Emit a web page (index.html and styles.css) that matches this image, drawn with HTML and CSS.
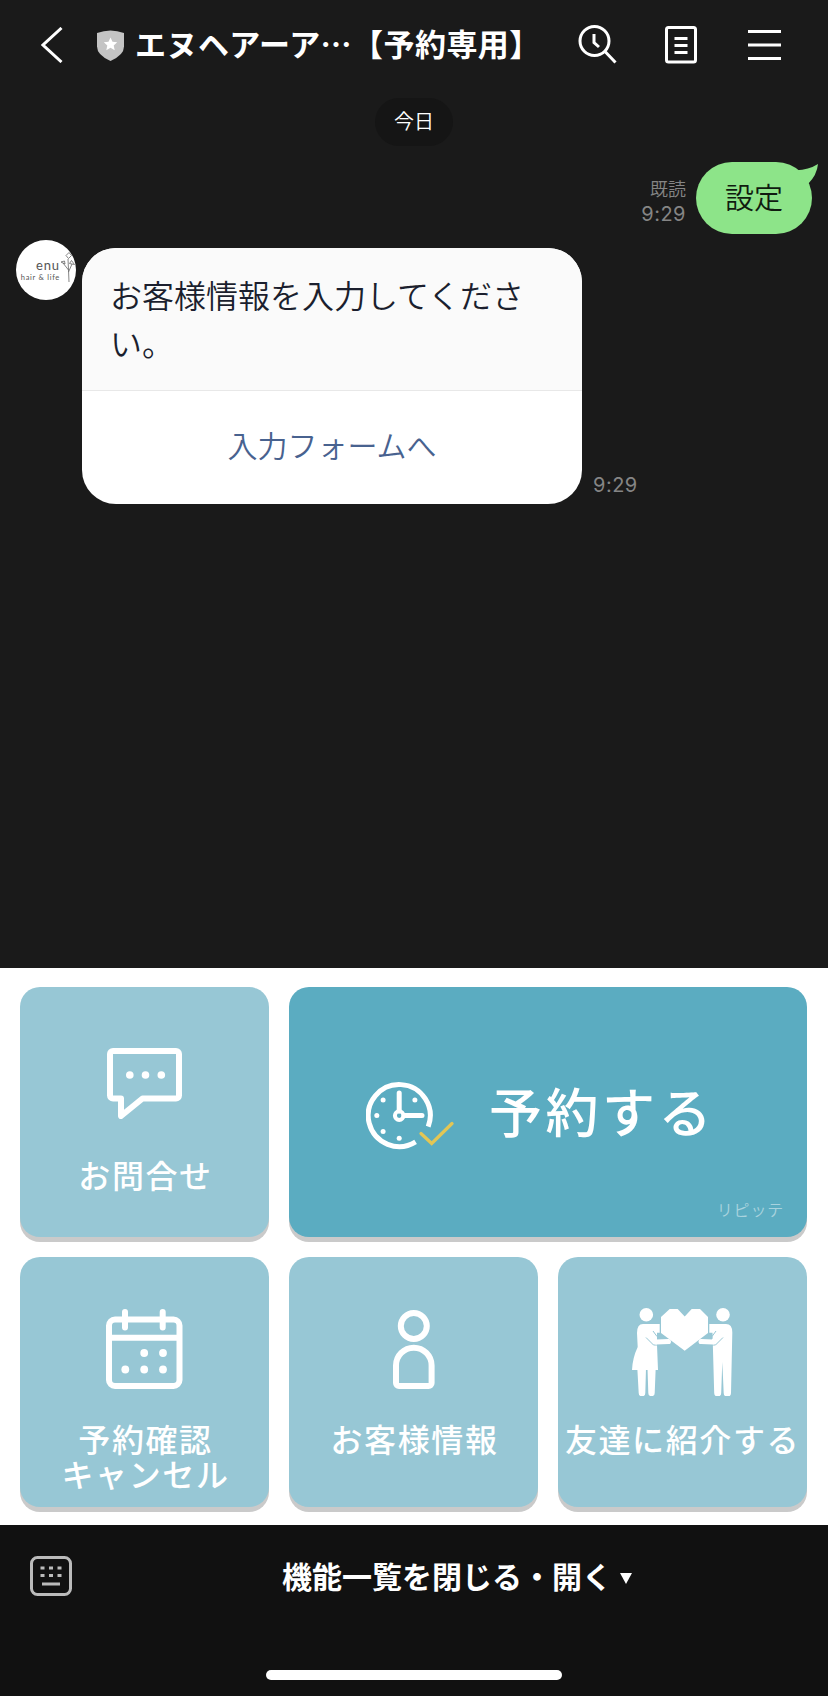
FILE: index.html
```html
<!DOCTYPE html>
<html lang="ja">
<head>
    <meta charset="UTF-8">
    <meta name="viewport" content="width=device-width, initial-scale=1.0">
    <title>エヌヘアーア…【予約専用】</title>
    <link rel="stylesheet" href="styles.css">
</head>
<body>

<header>
    <svg class="back" width="22" height="36" viewBox="0 0 22 36"><path d="M20.500 1L2 18l18.500 17"/></svg>
    <svg class="shield" width="27" height="31" viewBox="0 0 27 31">
        <path fill="#c4c4c4" d="M0 3Q13.500-2 27 3v13.500Q27 25 13.500 31Q0 25 0 16.500z"/>
        <path fill="#fff" d="M13.500 7.500l2 4.300 4.700.5-3.500 3.200 1 4.700-4.200-2.400-4.200 2.400 1-4.700-3.500-3.200 4.700-.5z"/>
    </svg>
    <h1>エヌヘアーア…【予約専用】</h1>
    <nav>
        <svg width="40" height="40" viewBox="0 0 40 40"><circle cx="16.500" cy="16" r="14.500"/><path d="M27 26.500L37.500 37.500M16 9v8.500l5 4.500"/></svg>
        <svg width="32" height="38" viewBox="0 0 32 38"><rect x="1.500" y="1.500" width="29" height="34.500" rx="2"/><path d="M9.500 12.500h13M9.500 19.500h13M9.500 26.500h13"/></svg>
        <svg width="33" height="32" viewBox="0 0 33 32"><path d="M0 2.500h33M0 16h33M0 29.500h33"/></svg>
    </nav>
</header>

<main class="chat-area">
    <div class="date">今日</div>

    <!-- Sent message -->
    <div class="row sent">
        <div class="meta"><span class="read">既読</span><span>9:29</span></div>
        <div class="bubble">設定
            <svg class="tail" width="26" height="26" viewBox="0 0 26 26"><path d="M0 8Q14 9 25 2Q24 13 15 22z"/></svg>
        </div>
    </div>

    <!-- Received message -->
    <div class="row received">
        <div class="avatar">
            <div class="logo"><b>enu</b><span>hair &amp; life</span></div>
            <svg width="14" height="32" viewBox="0 0 14 32"><path d="M8 30L7.500 18L2 11M7.500 20L11 12M7.500 18L7 7M5 3.500l3-3 2.500 3-3 3zM0 10l3.500-1 .5 3zM8.500 11.500l2-3 3 4z"/></svg>
        </div>
        <div class="card">
            <p>お客様情報を入力してください。</p>
            <a>入力フォームへ</a>
        </div>
        <div class="meta">9:29</div>
    </div>
</main>

<!-- Rich menu -->
<section class="menu">
    <div class="tile contact">
        <svg width="75" height="71" viewBox="0 0 75 71">
            <path class="line" d="M6 3h63a3 3 0 0 1 3 3v41.500a3 3 0 0 1-3 3H35.500L14 68V50.500H6a3 3 0 0 1-3-3V6a3 3 0 0 1 3-3z"/>
            <circle cx="22.800" cy="27" r="3.800"/><circle cx="38.500" cy="27" r="3.800"/><circle cx="54.300" cy="27" r="3.800"/>
        </svg>
        <span>お問合せ</span>
    </div>
    <div class="tile reserve">
        <svg width="88" height="68" viewBox="0 0 88 68">
            <path class="ring" d="M62.200 44.600A31 31 0 1 0 49.600 59.900"/>
            <path class="ring hand" d="M33.200 11v18M38 33.600h18"/>
            <circle class="hub" cx="33.200" cy="33.600" r="4.300"/>
            <circle cx="17.100" cy="18" r="2.500"/><circle cx="48.900" cy="18" r="2.500"/><circle cx="10.800" cy="33.600" r="2.500"/>
            <circle cx="17.100" cy="49.500" r="2.500"/><circle cx="33.200" cy="56.300" r="2.500"/>
            <path class="check" d="M55 51.500l10.700 10L86 41.500"/>
        </svg>
        <span>予約する</span>
        <small>リピッテ</small>
    </div>
    <div class="tile">
        <svg width="77" height="81" viewBox="0 0 77 81">
            <rect class="line" x="3" y="10.500" width="70.500" height="66.500" rx="6"/>
            <path class="line" d="M3 28.700h70M19 3v15.500M56.700 3v15.500"/>
            <circle cx="38.200" cy="44" r="3.900"/><circle cx="57" cy="44" r="3.900"/>
            <circle cx="19.300" cy="60.500" r="3.900"/><circle cx="38.200" cy="60.500" r="3.900"/><circle cx="57" cy="60.500" r="3.900"/>
        </svg>
        <span>予約確認<br>キャンセル</span>
    </div>
    <div class="tile">
        <svg width="42" height="81" viewBox="0 0 42 81">
            <circle class="line" cx="20.800" cy="17" r="13"/>
            <path class="line" d="M3 56.500a17.800 17.800 0 0 1 35.600 0V74a3 3 0 0 1-3 3H6a3 3 0 0 1-3-3z"/>
        </svg>
        <span>お客様情報</span>
    </div>
    <div class="tile friends">
        <svg width="101" height="88" viewBox="0 0 101 88">
            <path d="M37.700 1h8l7 7.500 7-7.500H68l8 8v16L52.700 42.700 29 25V9z"/>
            <circle cx="14.300" cy="6.800" r="6.800"/>
            <path d="M11 16h16.700v8.700H25V37l1 25H0Q.5 50 5.700 39L5 25Q5 16 11 16z"/>
            <path d="M5.300 60H14l-.7 25a3 3 0 0 1-6.600 0zM15.500 60h8.200l-1 25a3 3 0 0 1-6.400 0z"/>
            <circle cx="91" cy="6.800" r="6.800"/>
            <path d="M94 16H77.300v8.700h3.200l1.700 60.300a3 3 0 0 0 7 0L90.300 54l1.400 31a3 3 0 0 0 7.300 0l1.300-60Q100.500 16 94 16z"/>
            <path class="gap" d="M14 29.500l7.500 7.500h6M91 29.500L83.500 37h-6M21 23l4 5.500 3.500-.5M84 23l-4 5.500-3.500-.5"/>
            <path class="arm" d="M18 27.500l6 6.500 12.500-.4M87 27.500L81 34l-12-.4"/>
        </svg>
        <span>友達に紹介する</span>
    </div>
</section>

<footer>
    <div class="bar">
        <svg width="42" height="40" viewBox="0 0 42 40">
            <rect x="1.500" y="1.500" width="39" height="37" rx="6"/>
            <path d="M10.500 12h4M19 12h4M27.500 12h4M10.500 19.500h4M19 19.500h4M27.500 19.500h4M12 28h18"/>
        </svg>
        <div class="toggle">機能一覧を閉じる・開く<i></i></div>
    </div>
    <div class="home"></div>
</footer>

</body>
</html>
```
FILE: styles.css
```css
* {
    margin: 0;
    padding: 0;
    box-sizing: border-box;
}
body {
    font-family: "Noto Sans CJK JP", sans-serif;
    background-color: #1a1a1a;
    color: #fff;
    width: 828px;
    height: 1696px;
    display: flex;
    flex-direction: column;
    overflow: hidden;
}
svg {
    display: block;
    flex: none;
}

/* Header */
header {
    height: 90px;
    display: flex;
    align-items: center;
    padding-left: 41px;
    fill: none;
    stroke: #fff;
    stroke-width: 3;
}
header .shield {
    margin: 0 11px 0 34px;
    stroke: none;
}
header h1 {
    font-size: 31px;
    font-weight: 700;
    line-height: 40px;
    letter-spacing: 0.45px;
    width: 403px;
    margin-bottom: 4px;
    white-space: nowrap;
}
header nav {
    display: flex;
    align-items: center;
    margin-left: 40px;
}
header nav svg:nth-child(2) {
    margin: 0 51px 0 47px;
}

/* Chat */
.chat-area {
    height: 878px;
}
.date {
    width: 78px;
    height: 48px;
    margin: 8px auto 16px;
    border-radius: 24px;
    background-color: #151515;
    font-size: 20px;
    font-weight: 350;
    line-height: 46px;
    text-align: center;
}
.row {
    display: flex;
}
.meta {
    font-family: Inter, "Noto Sans CJK JP", sans-serif;
    font-size: 20px;
    line-height: 24px;
    letter-spacing: 0.5px;
    color: #858585;
}
.sent {
    justify-content: flex-end;
    align-items: center;
    padding-right: 16px;
}
.sent .meta {
    display: flex;
    flex-direction: column;
    align-items: flex-end;
    margin: 8px 10px 0 0;
}
.read {
    font-size: 18px;
    font-weight: 350;
    letter-spacing: 0;
}
.bubble {
    position: relative;
    width: 116px;
    height: 72px;
    border-radius: 36px;
    background-color: #8de489;
    color: #101c10;
    font-size: 29px;
    font-weight: 350;
    line-height: 69px;
    text-align: center;
}
.tail {
    position: absolute;
    top: 0;
    right: -7px;
    fill: #8de489;
}
.received {
    padding: 6px 0 0 16px;
}
.avatar {
    width: 60px;
    height: 60px;
    border-radius: 50%;
    background-color: #fff;
    color: #555;
    overflow: hidden;
    display: flex;
    padding: 12px 0 0 2px;
    margin-right: 6px;
    font-family: Lato, sans-serif;
}
.avatar svg {
    fill: none;
    stroke: #666;
    stroke-width: 0.8;
    margin-left: 1px;
}
.logo {
    width: 42px;
    padding-top: 6px;
    text-align: right;
    white-space: nowrap;
}
.logo b {
    display: block;
    font-size: 13px;
    font-weight: 400;
    line-height: 15px;
    letter-spacing: 0.9px;
}
.logo span {
    display: block;
    font-size: 7.5px;
    line-height: 9px;
    letter-spacing: 0.7px;
}
.card {
    width: 500px;
    height: 256px;
    margin: 8px 11px 0 0;
    border-radius: 34px;
    background-color: #fff;
    overflow: hidden;
    font-weight: 350;
}
.card p {
    height: 143px;
    padding: 22px 28px 0;
    background-color: #fafafa;
    border-bottom: 1px solid #e8e8e8;
    color: #1b1f2e;
    font-size: 32px;
    line-height: 48px;
}
.card a {
    display: block;
    color: #48628f;
    font-size: 30px;
    line-height: 107px;
    text-align: center;
}
.received .meta {
    align-self: flex-end;
    margin-bottom: 7px;
}

/* Rich menu */
.menu {
    height: 557px;
    padding: 19px 21px 0 20px;
    background-color: #fff;
    display: grid;
    grid-template-columns: repeat(3, 249px);
    grid-template-rows: 250px 250px;
    gap: 20px;
}
.tile {
    background-color: #97c7d5;
    border-radius: 20px;
    box-shadow: 0 5px 0 #cacaca;
    display: flex;
    flex-direction: column;
    align-items: center;
    padding-top: 52px;
    fill: #fff;
}
.tile span {
    font-size: 32px;
    font-weight: 500;
    line-height: 35px;
    letter-spacing: 1.6px;
    text-align: center;
    white-space: nowrap;
    margin: 31px 0 0 2px;
}
.contact {
    padding-top: 61px;
}
.contact span {
    margin-top: 38px;
}
.line {
    fill: none;
    stroke: #fff;
    stroke-width: 6;
    stroke-linecap: round;
    stroke-linejoin: round;
}
.reserve {
    grid-column: span 2;
    background-color: #5bacc1;
    flex-direction: row;
    align-items: flex-start;
    position: relative;
    padding: 95px 0 0 77px;
}
.reserve span {
    font-size: 53px;
    line-height: 60px;
    letter-spacing: 3.5px;
    margin: -2px 0 0 35px;
}
.reserve small {
    position: absolute;
    right: 23px;
    bottom: 16px;
    font-size: 16px;
    font-weight: 350;
    letter-spacing: 0.8px;
    color: #a9d3de;
}
.ring {
    fill: none;
    stroke: #fff;
    stroke-width: 5;
}
.hand {
    stroke-linecap: round;
}
.hub {
    fill: none;
    stroke: #fff;
    stroke-width: 4;
}
.check {
    fill: none;
    stroke: #e3c655;
    stroke-width: 3.2;
    stroke-linecap: round;
}
.friends {
    padding-top: 51px;
}
.friends span {
    margin: 25px 0 0;
}
.gap {
    fill: none;
    stroke: #97c7d5;
    stroke-width: 1;
}
.arm {
    fill: none;
    stroke: #fff;
    stroke-width: 5;
    stroke-linecap: round;
    stroke-linejoin: round;
}

/* Footer */
footer {
    height: 171px;
    background-color: #111;
}
.bar {
    display: flex;
    align-items: center;
    height: 102px;
    padding-left: 30px;
}
.bar svg {
    fill: none;
    stroke: #bbb;
    stroke-width: 3;
}
.toggle {
    display: flex;
    align-items: center;
    margin: 0 0 2px 210px;
    font-size: 30px;
    font-weight: 700;
}
.toggle i {
    margin: 6px 0 0 8px;
    border: 6px solid transparent;
    border-top: 11px solid #fff;
    border-bottom: 0;
}
.home {
    width: 296px;
    height: 10px;
    margin: 43px auto 0;
    border-radius: 5px;
    background-color: #fff;
}
```
